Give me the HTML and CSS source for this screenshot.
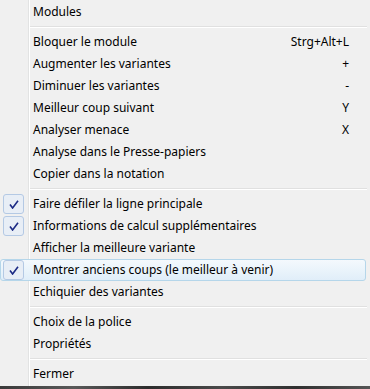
FILE: index.html
```html
<!DOCTYPE html>
<html>
<head>
<meta charset="utf-8">
<link rel="stylesheet" href="styles.css">
</head>
<body>
<div class="menu">
  <div class="item"><span class="icon"></span><span class="label">Modules</span></div>
  <div class="sep"></div>
  <div class="item"><span class="icon"></span><span class="label">Bloquer le module</span><span class="key">Strg+Alt+L</span></div>
  <div class="item"><span class="icon"></span><span class="label">Augmenter les variantes</span><span class="key">+</span></div>
  <div class="item"><span class="icon"></span><span class="label">Diminuer les variantes</span><span class="key">-</span></div>
  <div class="item"><span class="icon"></span><span class="label">Meilleur coup suivant</span><span class="key">Y</span></div>
  <div class="item"><span class="icon"></span><span class="label">Analyser menace</span><span class="key">X</span></div>
  <div class="item"><span class="icon"></span><span class="label">Analyse dans le Presse-papiers</span></div>
  <div class="item"><span class="icon"></span><span class="label">Copier dans la notation</span></div>
  <div class="sep"></div>
  <div class="item"><span class="icon checked"><svg width="10" height="9" viewBox="0 0 10 9"><path d="M1 4.5 L3.6 8 L9 0.8" fill="none" stroke="#1c2a85" stroke-width="1.6"/></svg></span><span class="label">Faire défiler la ligne principale</span></div>
  <div class="item"><span class="icon checked"><svg width="10" height="9" viewBox="0 0 10 9"><path d="M1 4.5 L3.6 8 L9 0.8" fill="none" stroke="#1c2a85" stroke-width="1.6"/></svg></span><span class="label">Informations de calcul supplémentaires</span></div>
  <div class="item"><span class="icon"></span><span class="label">Afficher la meilleure variante</span></div>
  <div class="item hover"><span class="icon checked"><svg width="10" height="9" viewBox="0 0 10 9"><path d="M1 4.5 L3.6 8 L9 0.8" fill="none" stroke="#1c2a85" stroke-width="1.6"/></svg></span><span class="label">Montrer anciens coups (le meilleur à venir)</span></div>
  <div class="item"><span class="icon"></span><span class="label">Echiquier des variantes</span></div>
  <div class="sep"></div>
  <div class="item"><span class="icon"></span><span class="label">Choix de la police</span></div>
  <div class="item"><span class="icon"></span><span class="label">Propriétés</span></div>
  <div class="sep"></div>
  <div class="item"><span class="icon"></span><span class="label">Fermer</span></div>
</div>
<div class="taskbar"></div>
</body>
</html>
```
FILE: styles.css
```css
html, body {
  margin: 0;
  padding: 0;
  background: #f0f0f0;
}
body {
  width: 370px;
  height: 389px;
  overflow: hidden;
  font-family: "Noto Sans", "Open Sans", sans-serif;
  font-size: 12px;
  color: #000;
}
.menu {
  height: 386px;
  box-sizing: border-box;
  padding-top: 1px;
  display: flex;
  flex-direction: column;
  background:
    linear-gradient(to right, transparent 28px, #e2e3e3 28px, #e2e3e3 29px, #ffffff 29px, #ffffff 30px, transparent 30px),
    #f0f0f0;
}
.item {
  height: 22px;
  flex: none;
  display: flex;
  align-items: center;
  padding-left: 3px;
  padding-right: 16px;
  box-sizing: border-box;
  width: 366px;
  border: 1px solid transparent;
  border-radius: 3px;
}
.item.hover {
  border-color: #b5d6ea;
  background: linear-gradient(#f4f9fd, #e0eef9);
}
.icon {
  width: 21px;
  height: 20px;
  box-sizing: border-box;
  margin-left: -1px;
  margin-right: 9px;
  display: flex;
  align-items: center;
  justify-content: center;
  border-radius: 3px;
  flex: none;
}
.icon.checked {
  border: 1px solid #b4c9e4;
  background: #e8eef6;
}
.label {
  flex: 1;
  white-space: nowrap;
  margin-top: -1px;
}
.key {
  white-space: nowrap;
  margin-top: -1px;
}
.sep {
  height: 8px;
  flex: none;
  margin-left: 30px;
  margin-right: 3px;
  background: linear-gradient(transparent 3px, #e0e0e0 3px, #e0e0e0 4px, #ffffff 4px, #ffffff 5px, transparent 5px);
}
.taskbar {
  height: 3px;
  background: linear-gradient(to right, #3a3a3a, #595959 20%, #2c2c2c 40%, #4a4a4a 60%, #303030 80%, #555 100%);
}
```
